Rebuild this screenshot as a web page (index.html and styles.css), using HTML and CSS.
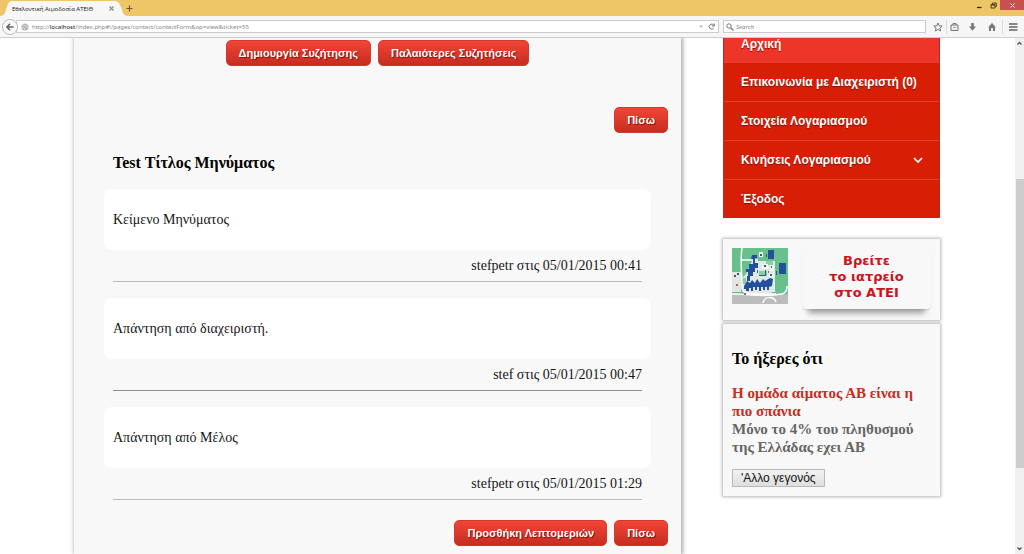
FILE: index.html
```html
<!DOCTYPE html>
<html lang="el">
<head>
<meta charset="utf-8">
<title>Εθελοντική Αιμοδοσία ΑΤΕΙΘ</title>
<link rel="stylesheet" href="styles.css">
</head>
<body>
<div class="browser">
  <header class="titlebar">
    <div class="tab">
      <svg class="tab-shape" viewBox="0 0 128 15" preserveAspectRatio="none" aria-hidden="true"><path d="M0 15C5 15 5 11 7 6C8 2 9 0 13 0H114C118 0 119 2 121 6C123 11 123 15 128 15Z"/></svg>
      <span class="tab-title">Εθελοντική Αιμοδοσία ΑΤΕΙΘ</span>
      <button class="tab-close" aria-label="Κλείσιμο καρτέλας"><svg width="5" height="5" viewBox="0 0 5 5"><path d="M.5 .5L4.500 4.500M4.500 .5L.5 4.500" stroke="#888" stroke-width="1.100"/></svg></button>
    </div>
    <button class="tab-new" aria-label="Νέα καρτέλα"><svg width="7" height="7" viewBox="0 0 7 7"><path d="M3.500 .5V6.500M.5 3.500H6.500" stroke="#6d5a2d" stroke-width="1.200"/></svg></button>
    <div class="window-buttons">
      <button class="win" aria-label="Ελαχιστοποίηση"><svg width="7" height="7" viewBox="0 0 7 7"><path d="M1 5.500H5.500" stroke="#2d2512" stroke-width="1.300"/></svg></button>
      <button class="win" aria-label="Επαναφορά"><svg width="7" height="7" viewBox="0 0 7 7"><path d="M1 2.500H5V6H1ZM2.500 2V1H6.300V4.500H5M1 3H5" fill="none" stroke="#4d3f1d"/></svg></button>
      <button class="win win-close" aria-label="Κλείσιμο"><svg width="5" height="5" viewBox="0 0 5 5"><path d="M.5 .5L4.500 4.500M4.500 .5L.5 4.500" stroke="#fff"/></svg></button>
    </div>
  </header>
  <div class="toolbar">
    <button class="back" aria-label="Πίσω στο ιστορικό"><svg width="8" height="8" viewBox="0 0 9 9"><path d="M8.500 4.500H1.500M4.500 1L1 4.500L4.500 8" fill="none" stroke="#666" stroke-width="1.700"/></svg></button>
    <div class="address">
      <svg width="8" height="8" viewBox="0 0 8 8" aria-hidden="true"><circle cx="4" cy="4" r="3.600" fill="#b0b0b0"/><path d="M1 3C3 1 3 3 4 3S5 1 7 3M1 5C3 4 4 5 4 7M5 4L7 5" fill="none" stroke="#eee" stroke-width=".8"/></svg>
      <a class="url" href="#!/pages/contact/contactForm&amp;op=view&amp;ticket=55">http://<b>localhost</b>/index.php#!/pages/contact/contactForm&amp;op=view&amp;ticket=55</a>
      <svg width="4" height="3" viewBox="0 0 4 3" aria-hidden="true"><path d="M0 .5H4L2 3Z" fill="#bbb"/></svg>
      <button class="reload" aria-label="Ανανέωση"><svg width="7" height="7" viewBox="0 0 7 7"><path d="M5.800 2.200A2.500 2.500 0 1 0 5.800 5M6.300 .5V3H3.900" fill="none" stroke="#777"/></svg></button>
    </div>
    <label class="search">
      <svg width="8" height="8" viewBox="0 0 8 8" aria-hidden="true"><circle cx="3" cy="3" r="2.200" fill="none" stroke="#777"/><path d="M4.700 4.700L7.500 7.500" stroke="#777" stroke-width="1.300"/></svg>
      <input type="search" placeholder="Search" aria-label="Search">
    </label>
    <nav class="tools">
      <button aria-label="Σελιδοδείκτης"><svg width="10" height="10" viewBox="0 0 10 10"><path d="M5 1L6.200 3.800L9.200 4L6.900 6L7.600 9L5 7.400L2.400 9L3.100 6L.8 4L3.800 3.800Z" fill="none" stroke="#777"/></svg></button>
      <button class="divided" aria-label="Σελιδοδείκτες"><svg width="9" height="10" viewBox="0 0 9 10"><path d="M1 3H8V8.500H1ZM3 3V1.500H6V3" fill="#eee" stroke="#777"/><path d="M3 5.500H6" stroke="#aaa"/></svg></button>
      <button class="wide" aria-label="Λήψεις"><svg width="9" height="10" viewBox="0 0 9 10"><path d="M3.200 1H5.800V4.500H8L4.500 8.800L1 4.500H3.200Z" fill="#777"/></svg></button>
      <button class="wide" aria-label="Αρχική σελίδα"><svg width="10" height="10" viewBox="0 0 10 10"><path d="M5 1L9 5.500H8V9H6V6H4V9H2V5.500H1Z" fill="#777"/></svg></button>
      <button class="divided wide" aria-label="Μενού"><svg width="10" height="10" viewBox="0 0 10 10"><path d="M1 2H9.500M1 5H9.500M1 8H9.500" stroke="#666" stroke-width="1.400"/></svg></button>
    </nav>
  </div>
  <div class="viewport">
    <div class="scroll-area">
      <div class="layout">
        <main class="main">
          <div class="topics">
            <button class="btn">Δημιουργία Συζήτησης</button>
            <button class="btn">Παλαιότερες Συζητήσεις</button>
          </div>
          <div class="actions"><button class="btn">Πίσω</button></div>
          <section class="thread">
            <h3 class="thread-title">Test Τίτλος Μηνύματος</h3>
            <article class="post"><p class="bubble">Κείμενο Μηνύματος</p><p class="meta">stefpetr στις 05/01/2015 00:41</p></article>
            <article class="post"><p class="bubble">Απάντηση από διαχειριστή.</p><p class="meta meta-dark">stef στις 05/01/2015 00:47</p></article>
            <article class="post"><p class="bubble">Απάντηση από Μέλος</p><p class="meta">stefpetr στις 05/01/2015 01:29</p></article>
          </section>
          <div class="actions actions-end"><button class="btn">Προσθήκη Λεπτομεριών</button><button class="btn">Πίσω</button></div>
        </main>
        <aside class="sidebar">
          <nav class="menu">
            <a class="item active" href="#home">Αρχική</a>
            <a class="item" href="#contact">Επικοινωνία με Διαχειριστή (0)</a>
            <a class="item" href="#account">Στοιχεία Λογαριασμού</a>
            <a class="item" href="#activity">Κινήσεις Λογαριασμού<svg width="10" height="7" viewBox="0 0 10 7" aria-hidden="true"><path d="M1 1L5 5L9 1" fill="none" stroke="#fff" stroke-width="1.600"/></svg></a>
            <a class="item" href="#exit">Έξοδος</a>
          </nav>
          <section class="card clinic">
            <svg class="map" viewBox="0 0 56 56" role="img" aria-label="Χάρτης ΑΤΕΙ">
              <rect width="56" height="56" fill="#68c08d"/>
              <path d="M0 46C14 46 28 48 56 46V56H0Z" fill="#bcbcbc"/>
              <path d="M0 24H9V44H0Z" fill="#e3e5e3"/>
              <path d="M20 13H41V44L36 46H15L10 42V30L14 26Z" fill="#dfeae5"/>
              <path d="M27 23H35V28H27ZM34 13H41V17H34ZM10 30H14V36H10Z" fill="#8bcda5"/>
              <path d="M10 0C8 12 10 22 10 41Q12 46 20 46H44M42 13V44M10 12H26M0 46C14 45 28 50 50 46Q55 45 55 38M31 55C32 48 42 48 44 54" fill="none" stroke="#fff" stroke-width="1.500"/>
              <path d="M36 2H42V11H36ZM47 15H54V26H47ZM20 7H25V10H23V15H26V20H23V24H21V28H18V33H15V28H16V24H14V21H17V16H21V11H19ZM12 38L15 33L18 35L20 32L23 35L25 31L28 35L31 31L33 33L38 30L41 31L40 38L37 39V42H35V39H33V42H31V39H29V43H27V39H25V42H23V39H21V43H19V40H17V43H14V41H12Z" fill="#234f9c"/>
              <path d="M27 4H31V9H27ZM30 16H36V21H30ZM38 17H42V23H38ZM37 25H42V29H37Z" fill="#f4f5f7"/>
              <path d="M28 6H30V8H28ZM32 17H34V19H32ZM2 27H4V29H2ZM5 25H7V27H5ZM39 18H40V20H39ZM44 23H45V27H44ZM27 28H34V22H33V27H27ZM38 26H40V28H38ZM34 6H35V9H34ZM25 22H26V25H25Z" fill="#315d80"/>
              <path d="M4 36H6V38H4ZM36 23H37V25H36ZM12 45H14V47H12Z" fill="#9d6670"/>
            </svg>
            <a class="clinic-link" href="#clinic">Βρείτε<br>το ιατρείο<br>στο ΑΤΕΙ</a>
          </section>
          <section class="card fact">
            <h3 class="fact-heading">Το ήξερες ότι</h3>
            <p class="fact-text"><span class="fact-lead">Η ομάδα αίματος ΑΒ είναι η πιο σπάνια</span><br>Μόνο το 4% του πληθυσμού της Ελλάδας εχει ΑΒ</p>
            <button class="fact-next">'Αλλο γεγονός</button>
          </section>
        </aside>
      </div>
    </div>
    <div class="scrollbar" aria-hidden="true">
      <svg width="7" height="7" viewBox="0 0 7 7"><path d="M1.500 4.500L3.500 2.500L5.500 4.500" fill="none" stroke="#555" stroke-width="1.300"/></svg>
      <div class="track"><div class="thumb"></div></div>
      <svg width="7" height="7" viewBox="0 0 7 7"><path d="M1.500 2.500L3.500 4.500L5.500 2.500" fill="none" stroke="#555" stroke-width="1.300"/></svg>
    </div>
  </div>
</div>
</body>
</html>
```

FILE: styles.css
```css
* { box-sizing: border-box; }
body { margin: 0; background: #fff; font-family: "Liberation Serif", "Times New Roman", serif; font-size: 14px; color: #151515; }
button { margin: 0; padding: 0; border: 0; background: none; font-family: "Liberation Sans", Arial, sans-serif; }
svg { display: block; flex: none; }
h3, p { margin: 0; }
a { color: inherit; text-decoration: none; }

.browser { display: flex; flex-direction: column; height: 100vh; }

/* window frame */
.titlebar { display: flex; flex: none; align-items: flex-end; height: 16px; background: #efc667; }
.tab { position: relative; display: flex; align-items: center; width: 128px; height: 15px; padding: 0 14px 0 12px; }
.tab-shape { position: absolute; inset: 0; width: 100%; height: 100%; fill: #f7f7f6; }
.tab-title { position: relative; flex: 1; font: 6px/10px "Open Sans", sans-serif; white-space: nowrap; color: #111; }
.tab-close { position: relative; }
.tab-new { margin-left: -2px; padding: 0 0 4px; }
.window-buttons { display: flex; align-self: flex-start; margin-left: auto; }
.win { display: grid; place-items: center; width: 14px; height: 10px; }
.win-close { width: 24px; background: #c75050; }

.toolbar { display: flex; flex: none; align-items: center; gap: 4px; height: 22px; padding: 0 2px; background: #f6f6f6; border-bottom: 1px solid #c9ced3; }
.back { position: relative; display: grid; place-items: center; flex: none; width: 16px; height: 16px; margin-right: -6px; background: #fbfbfb; border: 1px solid #bbb; border-radius: 50%; }
.address, .search { display: flex; align-items: center; height: 13px; background: #fff; border: 1px solid #ccc; }
.address { flex: 1; gap: 3px; padding: 0 3px 0 4px; }
.url { flex: 1; font: 6px/10px "Noto Sans", sans-serif; color: #888; }
.url b { font-weight: 400; color: #111; }
.reload { margin-left: 2px; }
.search { flex: none; gap: 2px; width: 203px; padding: 0 2px; }
.search input { flex: 1; min-width: 0; padding: 0; border: 0; outline: 0; background: none; font: italic 6px/10px "Open Sans", sans-serif; color: #777; }
.search input::placeholder { color: #777; opacity: 1; }
.tools { display: flex; flex: none; align-items: center; }
.tools button { display: grid; place-items: center; width: 16px; height: 14px; }
.tools .divided { border-left: 1px solid #ddd; }
.tools .wide { width: 20px; }

/* page area */
.viewport { display: flex; flex: 1; min-height: 0; }
.scroll-area { flex: 1; min-width: 0; padding-right: 1px; overflow: hidden; }
.layout { display: flex; gap: 42px; max-width: 866px; min-height: 100%; margin: 0 auto; }
.main { flex: 1; min-width: 0; padding: 2px 13px 8px 30px; background: #f8f8f8; box-shadow: 1px 0 4px 1px #aaa; }
.topics { display: flex; justify-content: center; gap: 7px; padding-right: 17px; }
.btn { height: 26px; padding: 0 12px; border: 1px solid #d23a2f; border-radius: 5px; background: linear-gradient(#f24537, #c62d1f); font-size: 11px; line-height: 16px; font-weight: 700; color: #fff; text-shadow: 1px 1px 1px #810e05; white-space: nowrap; }
.actions { display: flex; justify-content: flex-end; gap: 7px; margin-top: 41px; }
.actions-end { margin-top: 20px; }
.thread { padding: 19px 17px 0 0; }
.thread-title { padding: 0 9px; font-size: 16px; line-height: 22px; color: #000; }
.post { margin-top: 16px; }
.thread-title + .post { margin-top: 15px; }
.bubble { padding: 22px 9px; border-radius: 8px; background: #fff; line-height: 17px; }
.meta { margin: 0 9px; padding: 7px 0; border-bottom: 1px solid #bbb; line-height: 17px; text-align: right; }
.meta-dark { border-color: #8d8d8d; }

.sidebar { flex: none; width: 217px; margin-top: -14px; }
.menu { border: 1px solid #b02c24; border-top: 0; background: #d81f06; }
.item { display: flex; align-items: center; justify-content: space-between; height: 39px; padding: 1px 16px 0 17px; border-bottom: 1px solid #e33f2f; font: 700 12px/13px "Liberation Sans", Arial, sans-serif; color: #fff; text-shadow: 0 1px 1px #7a1208; }
.item.active { padding-top: 3px; background: #ee352a; }
.item:last-child { border-bottom: 0; height: 37px; }
.card { background: #f8f8f8; box-shadow: 0 0 3px 1px #b5b5b5; }
.clinic { display: flex; align-items: flex-start; gap: 14px; margin-top: 21px; padding: 9px; height: 81px; }
.map { width: 56px; height: 56px; }
.clinic-link { flex: 1; padding: 5px 0 8px; border-radius: 4px; background: #f8f8f8; box-shadow: 0 10px 6px -6px #999, 0 1px 1px #ddd; font: 700 13px/16px "DejaVu Sans", Verdana, sans-serif; color: #cf111c; text-align: center; }
.fact { margin-top: 4px; padding: 24px 9px 9px; }
.fact-heading { margin-bottom: 14px; font-size: 16px; line-height: 22px; color: #000; }
.fact-text { font-size: 15px; line-height: 18px; font-weight: 700; color: #666; }
.fact-lead { color: #c62d1f; }
.fact-next { height: 18px; margin-top: 13px; padding: 0 8px; border: 1px solid #b9b9b9; background: linear-gradient(#f2f2f2, #dedede); font-size: 12px; line-height: 14px; color: #111; }

.scrollbar { display: flex; flex: none; flex-direction: column; align-items: center; width: 9px; padding: 2px 0; background: #f0f0f0; }
.track { display: flex; flex: 1; flex-direction: column; width: 100%; padding: 132px 0 77px; }
.thumb { flex: 1; margin-left: 1px; background: #cdcdcd; }
```
